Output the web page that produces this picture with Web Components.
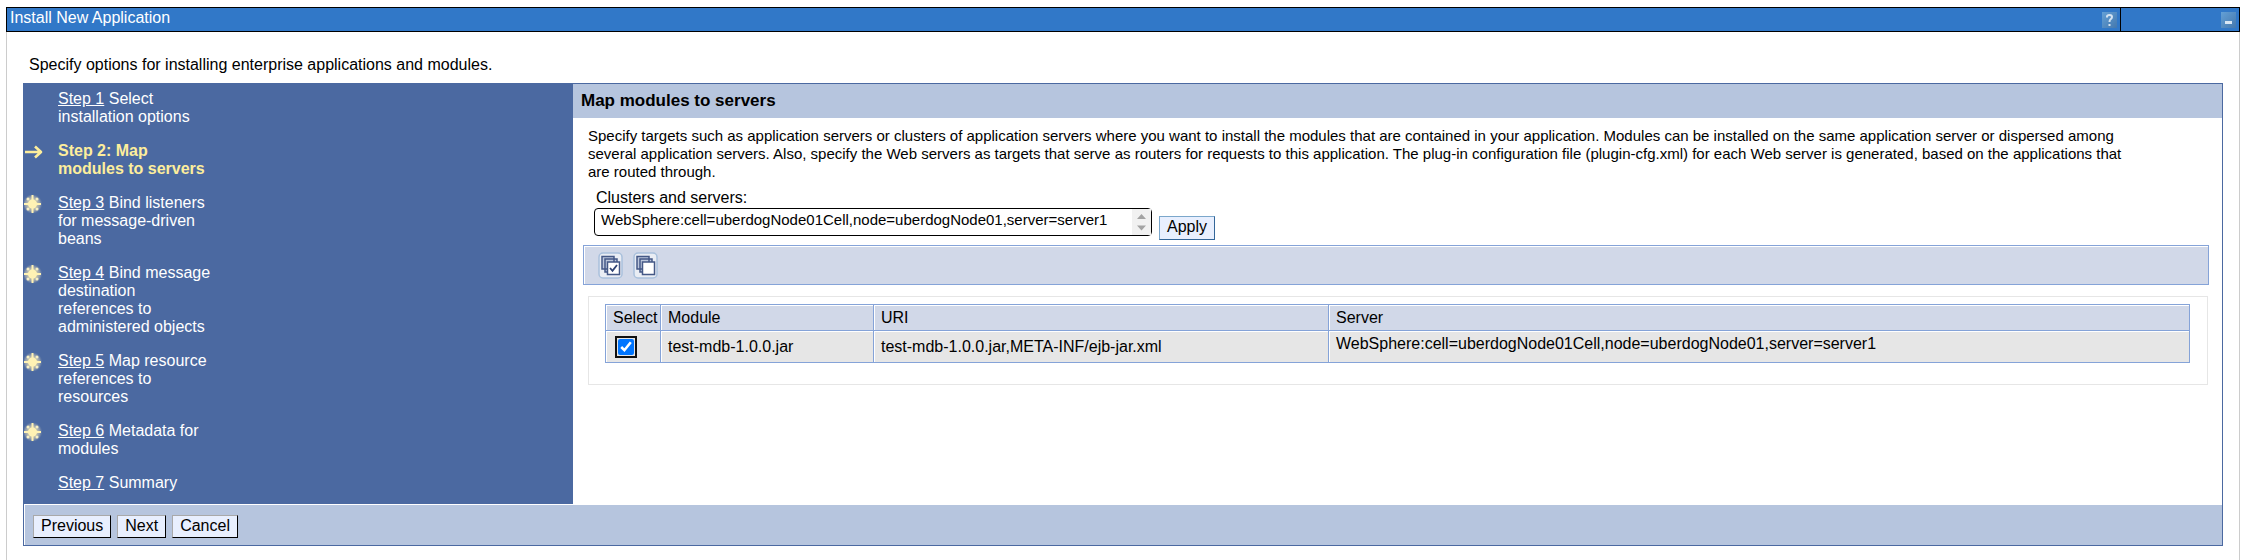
<!DOCTYPE html>
<html lang="en">
<head>
<meta charset="utf-8">
<title>Install New Application</title>
<style>
  body { margin: 0; background: #fff; color: #000; font: 16px/18px "Liberation Sans", Arial, sans-serif; }
</style>
</head>
<body>
<console-portlet heading="Install New Application">
  <p slot="intro">Specify options for installing enterprise applications and modules.</p>
  <install-wizard>
    <wizard-step slot="steps"><a href="#step1">Step 1</a> Select installation options</wizard-step>
    <wizard-step slot="steps" state="current">Step 2: Map modules to servers</wizard-step>
    <wizard-step slot="steps" state="required"><a href="#step3">Step 3</a> Bind listeners for message-driven beans</wizard-step>
    <wizard-step slot="steps" state="required"><a href="#step4">Step 4</a> Bind message destination references to administered objects</wizard-step>
    <wizard-step slot="steps" state="required"><a href="#step5">Step 5</a> Map resource references to resources</wizard-step>
    <wizard-step slot="steps" state="required"><a href="#step6">Step 6</a> Metadata for modules</wizard-step>
    <wizard-step slot="steps"><a href="#step7">Step 7</a> Summary</wizard-step>
    <span slot="title">Map modules to servers</span>
    <span slot="description">Specify targets such as application servers or clusters of application servers where you want to install the modules that are contained in your application. Modules can be installed on the same application server or dispersed among several application servers. Also, specify the Web servers as targets that serve as routers for requests to this application. The plug-in configuration file (plugin-cfg.xml) for each Web server is generated, based on the applications that are routed through.</span>
    <server-picker></server-picker>
    <selection-toolbar></selection-toolbar>
    <module-table></module-table>
    <console-button slot="actions">Previous</console-button>
    <console-button slot="actions">Next</console-button>
    <console-button slot="actions">Cancel</console-button>
  </install-wizard>
</console-portlet>

<script>
  const define = (name, html, setup) => {
    const template = document.createElement('template');
    template.innerHTML = html;
    customElements.define(name, class extends HTMLElement {
      constructor() {
        super();
        this.attachShadow({ mode: 'open' }).append(template.content.cloneNode(true));
      }
      connectedCallback() { if (setup) setup(this, this.shadowRoot); }
    });
  };

  define('console-portlet', `
    <style>
      :host { display: flex; flex-direction: column; box-sizing: border-box; min-height: 100vh; padding: 7px 9px 0 6px; }
      header { display: flex; height: 23px; background: #3178c8; border: 1px solid #000; color: #fff; }
      .cell { display: flex; justify-content: space-between; align-items: center; padding: 0 3px; }
      .main { flex: 1; }
      .side { width: 112px; justify-content: flex-end; border-left: 1px solid #000; }
      h1 { margin: 0 0 4px; font: inherit; }
      button { all: unset; width: 15px; height: 16px; }
      svg { display: block; }
      main { flex: 1; border: 1px solid #ccc; border-width: 0 1px; padding: 24px 16px 14px; }
      ::slotted(p) { margin: 0 0 9px 6px; }
    </style>
    <header>
      <div class="cell main"><h1></h1>
        <button aria-label="Help"><svg width="15" height="16" viewBox="0 0 15 16">
          <defs><linearGradient id="g" x2="1" y2="1"><stop stop-color="#64a0d6"/><stop offset="1" stop-color="#4478ae"/></linearGradient></defs>
          <rect width="15" height="16" fill="url(#g)"/>
          <path d="M5 5.5V4.5Q5 3 7.5 3T10 5Q10 6.5 8.5 7.3Q7.5 8 7.5 10M7.500 12V14" fill="none" stroke="#d3e3f2" stroke-width="2"/></svg></button>
      </div>
      <div class="cell side">
        <button aria-label="Minimize"><svg width="15" height="16" viewBox="0 0 15 16">
          <defs><linearGradient id="g" x2="1" y2="1"><stop stop-color="#64a0d6"/><stop offset="1" stop-color="#4478ae"/></linearGradient></defs>
          <rect width="15" height="16" fill="url(#g)"/>
          <rect x="4" y="9" width="7" height="3" fill="#d8e6f4"/></svg></button>
      </div>
    </header>
    <main><slot name="intro"></slot><slot></slot></main>`,
    (host, root) => { root.querySelector('h1').textContent = host.getAttribute('heading'); });

  define('install-wizard', `
    <style>
      :host { display: grid; grid-template-columns: 1fr 3fr; grid-template-columns: round(down, 25%, 1px) 1fr; border: 1px solid #4b69a1; }
      nav { background: #4b69a1; padding: 6px 0 12px; display: flex; flex-direction: column; gap: 16px; }
      h2 { margin: 0; padding: 8px; font: bold 17px/18px "Liberation Sans", Arial, sans-serif; background: #b6c5de; }
      p { margin: 0 0 8px; padding: 9px 72px 0 5px; font-size: 15px; }
      .body { padding: 0 13px 0 10px; }
      footer { grid-column: 1 / -1; display: flex; gap: 6px; padding: 10px 8px 7px; background: #b6c5de; border: 1px solid #fff; border-width: 1px 0 0 1px; }
    </style>
    <nav aria-label="Steps"><slot name="steps"></slot></nav>
    <section><h2><slot name="title"></slot></h2>
      <div class="body"><p><slot name="description"></slot></p><slot></slot></div></section>
    <footer><slot name="actions"></slot></footer>`);

  define('wizard-step', `
    <style>
      :host { display: grid; grid-template-columns: 34px 154px; color: #fff; }
      :host([state="current"]) { color: #fdee9c; font-weight: bold; }
      ::slotted(a) { color: inherit; }
      svg { display: none; }
      :host([state="current"]) .arrow, :host([state="required"]) .star { display: block; }
    </style>
    <div>
      <svg class="arrow" width="19" height="20" viewBox="0 0 19 20"><path d="M1 10H17M11 4.500L17 10L11 15.500" fill="none" stroke="#fdee9c" stroke-width="2.600" stroke-linejoin="round"/></svg>
      <svg class="star" width="18" height="20" viewBox="0 0 18 20">
        <defs><radialGradient id="h"><stop offset=".3" stop-color="#e6dfb0"/><stop offset=".75" stop-color="#a9adb0" stop-opacity=".7"/><stop offset="1" stop-color="#7088a8" stop-opacity="0"/></radialGradient></defs>
        <circle cx="8.500" cy="10" r="10" fill="url(#h)"/>
        <circle cx="8.500" cy="10" r="4.500" fill="#fff2b4"/>
        <path d="M8.500 1V19M0 10H17" stroke="#fff2b4" stroke-width="2"/>
        <g fill="#f7efc4"><circle cx="4" cy="5" r="1.500"/><circle cx="13" cy="5" r="1.500"/><circle cx="4" cy="15" r="1.500"/><circle cx="13" cy="15" r="1.500"/></g></svg>
    </div>
    <div><slot></slot></div>`);

  define('console-button', `
    <style>
      :host { display: inline-block; }
      button { font: inherit; color: #000; display: block; height: 23px; padding: 0 7px 2px; background: #e8effe; border: 1px solid #000; border-color: #a9a9a9 #000 #000 #a9a9a9; }
      :host([kind="inline"]) button { height: 24px; border-color: #7ba7cb #336699 #336699 #7ba7cb; }
    </style>
    <button type="button"><slot></slot></button>`);

  define('server-picker', `
    <style>
      :host { display: block; padding-left: 11px; }
      label { display: block; margin: 0 0 1px 2px; }
      .row { display: flex; align-items: flex-start; gap: 7px; }
      .box { display: grid; width: 558px; }
      .box > * { grid-area: 1 / 1; }
      select { appearance: none; font: inherit; font-size: 15px; color: #000; background: #fff; height: 28px; margin: 0; padding: 0 24px 5px 6px; border: 1px solid #000; border-radius: 4px; min-width: 0; }
      svg { justify-self: end; margin: 1px 1px 0 0; pointer-events: none; }
      console-button { margin-top: 8px; }
    </style>
    <label for="servers">Clusters and servers:</label>
    <div class="row">
      <div class="box">
        <select id="servers"><option>WebSphere:cell=uberdogNode01Cell,node=uberdogNode01,server=server1</option></select>
        <svg width="19" height="26" viewBox="0 0 19 26"><rect width="19" height="26" fill="#f1f1f1"/><path d="M5 10L9.500 5L14 10ZM5 16.500L9.500 21.500L14 16.500Z" fill="#a3a3a3"/></svg>
      </div>
      <console-button kind="inline">Apply</console-button>
    </div>`);

  const stackIcon = (mark) => `
    <svg width="25" height="27" viewBox="0 0 25 27">
      <rect x="1" y="1" width="23" height="25" rx="4" fill="#e9edf4" stroke="#a9c0dc" stroke-width="1.500"/>
      <path d="M4 4.500H16V17H4ZM7 7H19V20H7Z" fill="#bcc7dc" stroke="#445886" stroke-width="1.500"/>
      <path d="M9.500 10H21.500V22.500H9.500Z" fill="#fff" stroke="#445886" stroke-width="1.500"/>${mark}</svg>`;

  define('selection-toolbar', `
    <style>
      :host { display: flex; gap: 10px; margin-top: 5px; padding: 6px 15px 5px 14px; background: #d1d8e8; border: 1px solid #85a3d8; box-shadow: inset 1px 1px #fff; }
      button { all: unset; width: 25px; height: 27px; }
      svg { display: block; }
    </style>
    <button aria-label="Select all">${stackIcon('<path d="M12 16L14.500 18.800L19 13" fill="none" stroke="#2f4373" stroke-width="1.800"/>')}</button>
    <button aria-label="Deselect all">${stackIcon('')}</button>`);

  define('module-table', `
    <style>
      :host { display: block; margin: 11px 1px 0 5px; padding: 7px 17px 21px 16px; border: 1px solid #e6e6e6; }
      table { width: 100%; table-layout: fixed; border-collapse: collapse; }
      th, td { border: 1px solid #85a3d8; box-shadow: inset 1px 1px #fff; padding: 4px 7px 3px; font-weight: normal; text-align: left; }
      th { background: #d1d8e8; }
      td { background: #e6e6e6; height: 24px; }
      td:last-child { vertical-align: top; }
      .select { width: 40px; }
      .module { width: 198px; }
      .uri { width: 440px; }
      input { display: block; width: 16px; height: 16px; margin: 0 0 0 5px; accent-color: #0075ff; outline: 2px solid #101010; outline-offset: 1px; border-radius: 2px; }
    </style>
    <table>
      <thead><tr><th class="select">Select</th><th class="module">Module</th><th class="uri">URI</th><th>Server</th></tr></thead>
      <tbody><tr><td><input type="checkbox" checked aria-label="Select test-mdb-1.0.0.jar"></td><td>test-mdb-1.0.0.jar</td><td>test-mdb-1.0.0.jar,META-INF/ejb-jar.xml</td><td>WebSphere:cell=uberdogNode01Cell,node=uberdogNode01,server=server1</td></tr></tbody>
    </table>`);
</script>
</body>
</html>
